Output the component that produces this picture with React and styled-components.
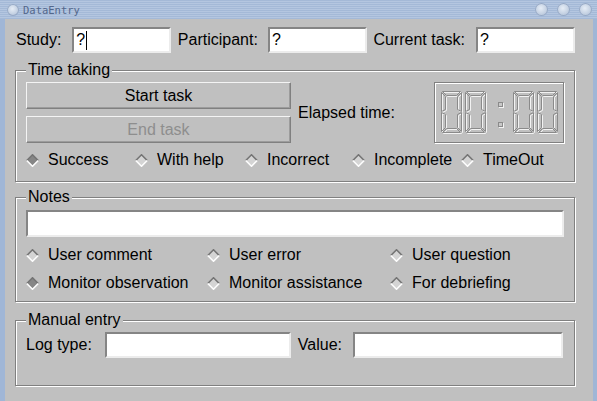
import React from 'react';
import styled, { createGlobalStyle } from 'styled-components';

const COLORS = {
  face: '#c0c0c0',
  shadow: '#808080',
  light: '#ffffff',
  frame: '#a0b6d6',
  title: '#53678b',
};

const GlobalStyle = createGlobalStyle`
  html, body {
    margin: 0;
    padding: 0;
    background: ${COLORS.face};
  }
  body {
    font-family: "Liberation Sans", Arial, sans-serif;
    font-size: 16px;
    color: #000;
  }
`;

const Window = styled.div`
  width: 597px;
  height: 401px;
  display: flex;
  flex-direction: column;
  overflow: hidden;
`;

const TitleBar = styled.div`
  height: 19px;
  flex: none;
  display: flex;
  align-items: center;
  padding: 0 5px 0 7px;
  background: repeating-linear-gradient(
    to bottom,
    #a4b9d7 0 1px,
    #b4c6e0 1px 2px
  );
`;

const TitleText = styled.span`
  margin-left: 4px;
  font-family: "DejaVu Sans Mono", "Liberation Mono", monospace;
  font-size: 10.5px;
  color: ${COLORS.title};
`;

const TitleButtons = styled.div`
  margin-left: auto;
  display: flex;
  gap: 9px;
`;

const Knob = styled.span`
  width: ${p => p.$size}px;
  height: ${p => p.$size}px;
  border-radius: 50%;
  background: radial-gradient(circle at 45% 40%, #e6edf6 0, #c3d0e2 55%, #9aaecb 100%);
  box-shadow: inset 0 0 0 1px #96a9c6;
`;

const Body = styled.div`
  flex: 1;
  background: ${COLORS.face};
  border-left: 5px solid ${COLORS.frame};
  border-right: 4px solid ${COLORS.frame};
  padding: 8px 18px 0 10px;
`;

const TopRow = styled.div`
  display: flex;
  align-items: center;
  justify-content: space-between;
  padding-left: 1px;
`;

const Field = styled.div`
  display: flex;
  align-items: center;
`;

const Label = styled.span`
  margin-left: ${p => p.$before ?? 0}px;
  margin-right: ${p => p.$after ?? 11}px;
  white-space: nowrap;
`;

const TextBox = styled.div`
  box-sizing: border-box;
  width: ${p => (p.$w ? p.$w + 'px' : '100%')};
  height: ${p => p.$h ?? 26}px;
  background: #fff;
  border: 2px solid;
  border-color: #858585 #ececec #ececec #858585;
  padding: 0 2px;
  display: flex;
  align-items: center;
`;

const Caret = styled.span`
  display: inline-block;
  width: 1px;
  height: 19px;
  margin-left: 1px;
  background: #000;
`;

const Group = styled.fieldset`
  margin: ${p => p.$mt}px 0 0;
  padding: ${p => p.$pt}px 10px ${p => p.$pb}px;
  border: 1px solid ${COLORS.shadow};
  box-shadow: inset 1px 1px 0 ${COLORS.light}, 1px 1px 0 ${COLORS.light};
  min-width: 0;
`;

const Legend = styled.legend`
  padding: 0 2px;
  font-size: 16px;
  line-height: 16px;
  background: ${COLORS.face};
`;

const TimeBody = styled.div`
  display: flex;
  align-items: center;
`;

const ButtonStack = styled.div`
  width: 265px;
  display: flex;
  flex-direction: column;
  gap: 7px;
`;

const Button = styled.button`
  height: 27px;
  padding: 0;
  font-family: inherit;
  font-size: 16px;
  color: ${p => (p.disabled ? '#8e8e8e' : '#000')};
  background: ${COLORS.face};
  border: 1px solid;
  border-color: #f4f4f4 ${COLORS.shadow} ${COLORS.shadow} #f4f4f4;
  box-shadow: inset -1px -1px 0 #9c9c9c;
`;

const Lcd = styled.div`
  box-sizing: border-box;
  margin-left: auto;
  width: 130px;
  height: 61px;
  border: 1px solid ${COLORS.shadow};
  box-shadow: inset 1px 1px 0 ${COLORS.light}, 1px 1px 0 ${COLORS.light};
  display: flex;
  align-items: center;
  justify-content: center;
`;

const RadioRow = styled.div`
  display: grid;
  grid-template-columns: ${p => p.$cols};
  align-items: center;
  height: 20px;
  margin-top: ${p => p.$mt ?? 7}px;
`;

const RadioItem = styled.div`
  display: flex;
  align-items: center;
  gap: 9px;
  white-space: nowrap;
`;

const EntryRow = styled.div`
  display: flex;
  align-items: center;
`;

const SEGMENTS = [
  'M1 0 H19 L15 4 H5 Z',
  'M1 41 H19 L15 37 H5 Z',
  'M0 1 L4 5 V18 L0 20 Z',
  'M0 21 L4 23 V36 L0 40 Z',
  'M20 1 V20 L16 18 V5 Z',
  'M20 21 V40 L16 36 V23 Z',
];

const Digit = ({ x }) => (
  <g transform={`translate(${x} 0)`}>
    {SEGMENTS.map(d => (
      <path key={'w' + d} d={d} transform="translate(1.5 1.5)" fill="none" stroke="#f2f2f2" />
    ))}
    {SEGMENTS.map(d => (
      <path key={'g' + d} d={d} transform="translate(0.5 0.5)" fill="none" stroke="#8a8a8a" />
    ))}
  </g>
);

const Dot = ({ y }) => (
  <g>
    <rect x="59.5" y={y + 0.5} width="4" height="4" fill="none" stroke="#f2f2f2" />
    <rect x="58.5" y={y - 0.5} width="4" height="4" fill="#c8c8c8" stroke="#8a8a8a" />
  </g>
);

const Clock = () => (
  <svg width="118" height="43" viewBox="0 0 118 43">
    <Digit x={1} />
    <Digit x={25} />
    <Dot y={12} />
    <Dot y={32} />
    <Digit x={73} />
    <Digit x={97} />
  </svg>
);

const Diamond = ({ checked }) => (
  <svg width="13" height="13" viewBox="0 0 13 13">
    <path d="M6.5 0.5 L12.5 6.5 L6.5 12.5 L0.5 6.5 Z" fill={checked ? '#868686' : '#d4d4d4'} />
    <path d="M0.8 6.5 L6.5 0.8 L12.2 6.5" fill="none" stroke="#747474" strokeWidth="1.6" />
    <path d="M0.8 6.5 L6.5 12.2 L12.2 6.5" fill="none" stroke="#fdfdfd" strokeWidth="1.6" />
  </svg>
);

const Radio = ({ label, checked }) => (
  <RadioItem>
    <Diamond checked={checked} />
    <span>{label}</span>
  </RadioItem>
);

const App = () => (
  <>
    <GlobalStyle />
    <Window>
      <TitleBar>
        <Knob $size={12} />
        <TitleText>DataEntry</TitleText>
        <TitleButtons>
          <Knob $size={13} />
          <Knob $size={13} />
          <Knob $size={13} />
        </TitleButtons>
      </TitleBar>

      <Body>
        <TopRow>
          <Field>
            <Label>Study:</Label>
            <TextBox $w={99}>?<Caret /></TextBox>
          </Field>
          <Field>
            <Label $after={10}>Participant:</Label>
            <TextBox $w={99}>?</TextBox>
          </Field>
          <Field>
            <Label>Current task:</Label>
            <TextBox $w={99}>?</TextBox>
          </Field>
        </TopRow>

        <Group $mt={9} $pt={4} $pb={11}>
          <Legend>Time taking</Legend>
          <TimeBody>
            <ButtonStack>
              <Button>Start task</Button>
              <Button disabled>End task</Button>
            </ButtonStack>
            <Label $before={7} $after={0}>Elapsed time:</Label>
            <Lcd>
              <Clock />
            </Lcd>
          </TimeBody>
          <RadioRow $cols="109px 110px 107px 109px auto">
            <Radio label="Success" checked />
            <Radio label="With help" />
            <Radio label="Incorrect" />
            <Radio label="Incomplete" />
            <Radio label="TimeOut" />
          </RadioRow>
        </Group>

        <Group $mt={7} $pt={5} $pb={8}>
          <Legend>Notes</Legend>
          <TextBox $h={27} />
          <RadioRow $cols="181px 183px auto" $mt={8}>
            <Radio label="User comment" />
            <Radio label="User error" />
            <Radio label="User question" />
          </RadioRow>
          <RadioRow $cols="181px 183px auto" $mt={8}>
            <Radio label="Monitor observation" checked />
            <Radio label="Monitor assistance" />
            <Radio label="For debriefing" />
          </RadioRow>
        </Group>

        <Group $mt={10} $pt={4} $pb={27}>
          <Legend>Manual entry</Legend>
          <EntryRow>
            <Label $after={13}>Log type:</Label>
            <TextBox $w={186} />
            <Label $before={7}>Value:</Label>
            <TextBox $w={210} />
          </EntryRow>
        </Group>
      </Body>
    </Window>
  </>
);

export default App;
